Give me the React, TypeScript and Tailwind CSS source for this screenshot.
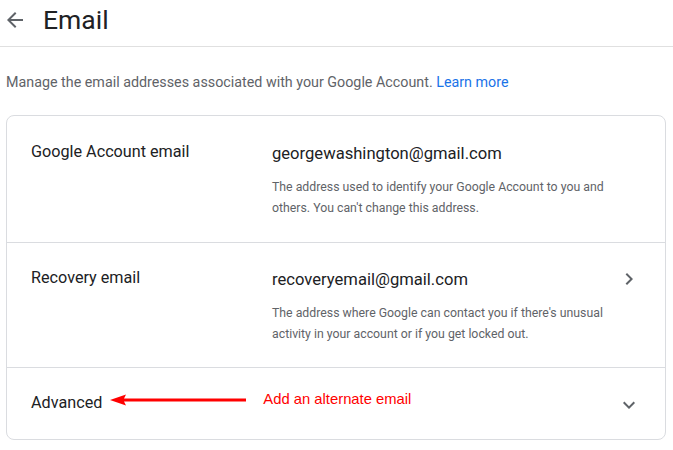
const rows = [
  {
    label: 'Google Account email',
    value: 'georgewashington@gmail.com',
    desc: "The address used to identify your Google Account to you and others. You can't change this address.",
    chevron: false,
  },
  {
    label: 'Recovery email',
    value: 'recoveryemail@gmail.com',
    desc: "The address where Google can contact you if there's unusual activity in your account or if you get locked out.",
    chevron: true,
  },
];

function ChevronRight() {
  return (
    <svg width="24" height="24" viewBox="0 0 24 24" className="fill-[#5f6368] shrink-0">
      <path d="M10 6L8.59 7.41 13.17 12l-4.58 4.59L10 18l6-6z" />
    </svg>
  );
}

export default function App() {
  return (
    <div className="w-[673px] h-[450px] bg-white font-['Roboto',sans-serif] overflow-hidden">
      {/* header */}
      <div className="h-[47px] flex items-start pt-[4px] pl-[3px] border-b border-[#e0e0e0]">
        <svg width="24" height="24" viewBox="0 0 24 24" className="mt-[4px] fill-[#5f6368] shrink-0">
          <path d="M20 11H7.83l5.59-5.59L12 4l-8 8 8 8 1.41-1.41L7.83 13H20v-2z" />
        </svg>
        <h1 className="ml-[16px] text-[26.5px] leading-[32px] text-[#202124] font-normal">Email</h1>
      </div>

      <p className="mt-[25px] px-[6px] text-[14.3px] leading-[20px] text-[#5f6368] whitespace-nowrap">
        Manage the email addresses associated with your Google Account.{' '}
        <a href="#" className="text-[#1a73e8]">Learn more</a>
      </p>

      <div className="mt-[23px] ml-[6px] w-[660px] border border-[#dadce0] rounded-lg">
        {rows.map((row, i) => (
          <div
            key={row.label}
            className={`flex pl-6 pr-6 ${i === 0 ? 'pt-[24px] pb-[23px]' : 'pt-[23px] pb-[22px]'} border-b border-[#dadce0]`}
          >
            <div className="w-[241px] shrink-0 text-[16.2px] leading-[24px] text-[#202124]">{row.label}</div>
            <div className="flex-1 min-w-0">
              <div className="mt-[2px] text-[16.6px] leading-[24px] text-[#202124]">{row.value}</div>
              <div className="mt-[11px] text-[12.3px] leading-[21px] text-[#5f6368] max-w-[340px]">{row.desc}</div>
            </div>
            <div className="w-6 flex items-start pt-[1px]">{row.chevron && <ChevronRight />}</div>
          </div>
        ))}

        <div className="h-[71px] flex items-center pl-6 pr-6">
          <span className="text-[16.2px] leading-[24px] text-[#202124] -mt-[1px]">Advanced</span>
          <svg width="136" height="12" viewBox="0 0 136 12" className="ml-[8px] -mt-[8px] shrink-0">
            <path d="M0 6 L16 0.5 L14 4.5 L136 4.5 L136 7.5 L14 7.5 L16 11.5 Z" fill="#ff0000" />
          </svg>
          <span className="ml-[17px] -mt-[10px] text-[14.8px] leading-[18px] text-[#ff0000] font-['Liberation_Sans',sans-serif]">
            Add an alternate email
          </span>
          <div className="flex-1" />
          <svg width="24" height="24" viewBox="0 0 24 24" className="fill-[#5f6368] shrink-0 mt-[2px]">
            <path d="M16.59 8.59L12 13.17 7.41 8.59 6 10l6 6 6-6z" />
          </svg>
        </div>
      </div>
    </div>
  );
}
